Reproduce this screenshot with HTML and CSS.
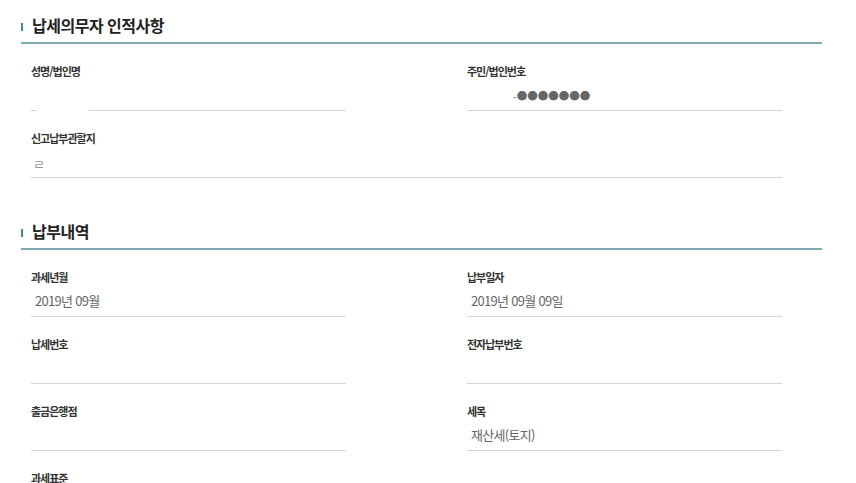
FILE: index.html
```html
<!DOCTYPE html>
<html lang="ko">
<head>
<meta charset="utf-8">
<title>납부내역</title>
<link rel="stylesheet" href="styles.css">
</head>
<body>
<div class="page">
  <section class="section">
    <h2 class="section-title"><span class="bar"></span>납세의무자 인적사항</h2>
    <div class="fields">
      <div class="field">
        <div class="label">성명/법인명</div>
        <div class="value redacted"><span class="redact"></span></div>
      </div>
      <div class="field">
        <div class="label">주민/법인번호</div>
        <div class="value"><span class="mask">-●●●●●●●</span></div>
      </div>
      <div class="field wide">
        <div class="label">신고납부관할지</div>
        <div class="value faint">ㄹ</div>
      </div>
    </div>
  </section>

  <section class="section">
    <h2 class="section-title"><span class="bar"></span>납부내역</h2>
    <div class="fields">
      <div class="field">
        <div class="label">과세년월</div>
        <div class="value">2019년 09월</div>
      </div>
      <div class="field">
        <div class="label">납부일자</div>
        <div class="value">2019년 09월 09일</div>
      </div>
      <div class="field">
        <div class="label">납세번호</div>
        <div class="value"></div>
      </div>
      <div class="field">
        <div class="label">전자납부번호</div>
        <div class="value"></div>
      </div>
      <div class="field">
        <div class="label">출금은행점</div>
        <div class="value"></div>
      </div>
      <div class="field">
        <div class="label">세목</div>
        <div class="value">재산세(토지)</div>
      </div>
      <div class="field">
        <div class="label">과세표준</div>
        <div class="value"></div>
      </div>
    </div>
  </section>
</div>
</body>
</html>
```

FILE: styles.css
```css
* {
  box-sizing: border-box;
}

html, body {
  margin: 0;
  padding: 0;
  background: #ffffff;
}

body {
  font-family: "Noto Sans CJK KR", "Noto Sans", sans-serif;
  color: #333333;
  overflow: hidden;
}

.page {
  width: 856px;
  padding: 13px 34px 0 21px;
}

.section {
  margin-bottom: 41px;
}

.section-title {
  display: flex;
  align-items: center;
  margin: 0;
  padding: 0 0 5px 0;
  height: 31px;
  font-size: 16px;
  line-height: 24px;
  font-weight: 700;
  letter-spacing: -0.5px;
  color: #222222;
  border-bottom: 2px solid #7ea9b0;
}

.bar {
  display: inline-block;
  width: 2px;
  height: 8px;
  margin: 4px 9px 0 0;
  background: #3d8a9b;
}

.fields {
  display: grid;
  grid-template-columns: 315px 315px;
  column-gap: 121px;
  row-gap: 20px;
  padding: 0 0 0 10px;
  margin-top: 20px;
}

.field {
  display: flex;
  flex-direction: column;
}

.field.wide {
  grid-column: 1 / -1;
}

.label {
  font-size: 11px;
  line-height: 14px;
  font-weight: 700;
  letter-spacing: -1px;
  color: #333333;
}

.value {
  height: 33px;
  padding-top: 2px;
  line-height: 30px;
  padding-left: 4px;
  font-size: 13px;
  letter-spacing: -0.7px;
  color: #666666;
  border-bottom: 1px solid #d6d6d6;
}

.value.faint {
  color: #999999;
  padding-left: 2px;
  line-height: 34px;
}

.value.redacted {
  position: relative;
}

.redact {
  position: absolute;
  left: 6px;
  bottom: -1px;
  width: 52px;
  height: 2px;
  background: #ffffff;
}

.mask {
  margin-left: 42px;
  font-size: 10.5px;
  letter-spacing: 0;
  color: #666666;
}
```
